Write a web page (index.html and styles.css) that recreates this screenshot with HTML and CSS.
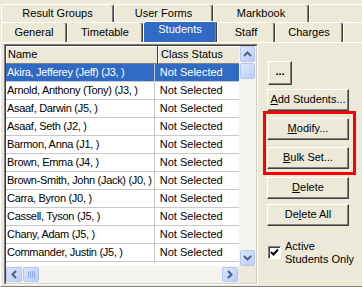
FILE: index.html
```html
<!DOCTYPE html>
<html>
<head>
<meta charset="utf-8">
<link rel="stylesheet" href="styles.css">
</head>
<body>
<div class="win">
  <div class="tabs">
    <div class="tabrow back">
      <div class="tab t-result">Result Groups</div>
      <div class="tab t-forms">User Forms</div>
      <div class="tab t-mark">Markbook</div>
      <div class="tab t-fill"></div>
    </div>
    <div class="tabrow front">
      <div class="tab t-general">General</div>
      <div class="tab t-time">Timetable</div>
      <div class="tab t-students sel">Students</div>
      <div class="tab t-staff">Staff</div>
      <div class="tab t-charges">Charges</div>
      <div class="tab t-fill"></div>
    </div>
  </div>
  <div class="panel">
    <div class="list">
      <div class="listin">
        <div class="client">
          <div class="hdr"><div class="h1">Name</div><div class="h2">Class Status</div></div>
          <div class="row sel"><div class="c1">Akira, Jefferey (Jeff) (J3, )</div><div class="c2">Not Selected</div></div>
          <div class="row"><div class="c1">Arnold, Anthony (Tony) (J3, )</div><div class="c2">Not Selected</div></div>
          <div class="row"><div class="c1">Asaaf, Darwin (J5, )</div><div class="c2">Not Selected</div></div>
          <div class="row"><div class="c1">Asaaf, Seth (J2, )</div><div class="c2">Not Selected</div></div>
          <div class="row"><div class="c1">Barmon, Anna (J1, )</div><div class="c2">Not Selected</div></div>
          <div class="row"><div class="c1">Brown, Emma (J4, )</div><div class="c2">Not Selected</div></div>
          <div class="row"><div class="c1">Brown-Smith, John (Jack) (J0, )</div><div class="c2">Not Selected</div></div>
          <div class="row"><div class="c1">Carra, Byron (J0, )</div><div class="c2">Not Selected</div></div>
          <div class="row"><div class="c1">Cassell, Tyson (J5, )</div><div class="c2">Not Selected</div></div>
          <div class="row"><div class="c1">Chany, Adam (J5, )</div><div class="c2">Not Selected</div></div>
          <div class="row"><div class="c1">Commander, Justin (J5, )</div><div class="c2">Not Selected</div></div>
        </div>
        <div class="vscroll">
          <div class="sbtn vbtn"><svg width="9" height="6" viewBox="0 0 9 6"><path d="M1 5 L4.5 1.5 L8 5" fill="none" stroke="#4D6185" stroke-width="2"/></svg></div>
          <div class="sbtn vthumb"></div>
          <div class="sbtn vbtn vdown"><svg width="9" height="6" viewBox="0 0 9 6"><path d="M1 1 L4.5 4.5 L8 1" fill="none" stroke="#4D6185" stroke-width="2"/></svg></div>
        </div>
        <div class="hscroll">
          <div class="sbtn hbtn"><svg width="6" height="9" viewBox="0 0 6 9"><path d="M5 1 L1.5 4.5 L5 8" fill="none" stroke="#4D6185" stroke-width="2"/></svg></div>
          <div class="sbtn hthumb"><svg width="7" height="7" viewBox="0 0 7 7"><path d="M0.5 0 V7 M2.5 0 V7 M4.5 0 V7 M6.5 0 V7" stroke="#8FA9E6" stroke-width="1"/></svg></div>
          <div class="sbtn hbtn hright"><svg width="6" height="9" viewBox="0 0 6 9"><path d="M1 1 L4.5 4.5 L1 8" fill="none" stroke="#4D6185" stroke-width="2"/></svg></div>
        </div>
        <div class="corner"></div>
      </div>
    </div>
    <div class="side">
      <div class="btn dots">...</div>
      <div class="btn b-add"><u>A</u>dd Students...</div>
      <div class="btn b-modify"><u>M</u>odify...</div>
      <div class="btn b-bulk"><u>B</u>ulk Set...</div>
      <div class="btn b-delete"><u>D</u>elete</div>
      <div class="btn b-delall">De<u>l</u>ete All</div>
      <div class="chk">
        <div class="box"><svg width="9" height="9" viewBox="0 0 9 9"><path d="M1 4 L3.5 6.5 L8 1.5" fill="none" stroke="#000" stroke-width="2"/></svg></div>
        <div class="lbl">Active<br>Students Only</div>
      </div>
    </div>
  </div>
  <div class="annot"></div>
</div>
</body>
</html>
```

FILE: styles.css
```css
body {
  margin: 0;
  background: #ECE9D8;
  font: 11px "Liberation Sans", Arial, sans-serif;
  color: #000;
}
.win {
  position: relative;
  width: 362px;
  height: 287px;
  overflow: hidden;
}
.tabs {
  padding: 4px 0 0 1px;
}
.tabrow {
  display: flex;
}
.back { height: 18px; }
.front { height: 20px; }
.tab {
  box-sizing: border-box;
  flex: none;
  height: 100%;
  border-top: 1px solid #fff;
  border-left: 1px solid #fff;
  border-right: 1px solid #404040;
  box-shadow: inset -1px 0 #808080;
  border-radius: 3px 3px 0 0;
  text-align: center;
  white-space: nowrap;
  background: #ECE9D8;
}
.back .tab { line-height: 17px; }
.front .tab { line-height: 19px; }
.t-result { width: 113px; }
.t-forms { width: 99px; }
.t-mark { width: 96px; }
.t-general { width: 66px; }
.t-time { width: 76px; }
.t-students { width: 74px; }
.t-staff { width: 58px; }
.t-charges { width: 68px; }
.t-fill { width: 60px; }
.tab.sel {
  background: #316AC5;
  color: #fff;
  margin-top: -1px;
  height: 21px;
  line-height: 15px;
  position: relative;
  z-index: 1;
}
.panel {
  display: flex;
  height: 245px;
  box-sizing: border-box;
  border-top: 1px solid #fff;
  border-left: 1px solid #fff;
  border-bottom: 1px solid #808080;
  padding: 1px 0 0 3px;
}
.list {
  box-sizing: border-box;
  width: 254px;
  height: 241px;
  flex: none;
  border: 1px solid;
  border-color: #808080 #fff #fff #808080;
}
.listin {
  box-sizing: border-box;
  height: 100%;
  border: 1px solid;
  border-color: #404040 #D4D0C8 #D4D0C8 #404040;
  display: grid;
  grid-template-columns: 233px 17px;
  grid-template-rows: 220px 17px;
}
.client {
  background: #fff;
  overflow: hidden;
}
.hdr {
  display: flex;
  height: 18px;
  background: #ECE9D8;
}
.hdr > div {
  box-sizing: border-box;
  height: 18px;
  line-height: 17px;
  border-right: 1px solid #404040;
  border-bottom: 1px solid #808080;
  box-shadow: inset 1px 1px #fff;
  white-space: nowrap;
  overflow: hidden;
}
.h1 { width: 152px; padding-left: 2px; }
.h2 { width: 81px; padding-left: 3px; border-right: none !important; }
.row {
  display: flex;
  height: 18px;
  box-sizing: border-box;
  border-bottom: 1px solid #C8C8C8;
  line-height: 16px;
}
.row > div {
  white-space: nowrap;
  overflow: hidden;
}
.c1 {
  box-sizing: border-box;
  width: 152px;
  padding-left: 1px;
  border-right: 1px solid #C8C8C8;
  letter-spacing: -0.3px;
}
.c2 {
  width: 81px;
  padding-left: 5px;
}
.row.sel > div {
  background: #316AC5;
  color: #fff;
}
.vscroll {
  background: #F4F3EE;
  display: flex;
  flex-direction: column;
  padding-left: 1px;
}
.hscroll {
  background: #F4F3EE;
  display: flex;
  padding-top: 1px;
}
.corner {
  background: #ECE9D8;
}
.sbtn {
  box-sizing: border-box;
  border: 1px solid #B4C6F0;
  border-radius: 2px;
  background: linear-gradient(135deg, #DCE6FE, #BACCF7);
  display: flex;
  align-items: center;
  justify-content: center;
}
.vbtn { width: 15px; height: 16px; }
.vthumb { width: 15px; height: 16px; margin-top: 1px; }
.vdown { margin-top: auto; }
.hbtn { width: 16px; height: 15px; }
.hthumb { width: 16px; height: 15px; margin-left: 1px; }
.hright { margin-left: auto; margin-right: 1px; }
.side {
  margin-left: 9px;
  padding-top: 17px;
  width: 82px;
  flex: none;
  display: flex;
  flex-direction: column;
}
.btn {
  box-sizing: border-box;
  width: 82px;
  height: 22px;
  border: 1px solid;
  border-color: #fff #404040 #404040 #fff;
  box-shadow: inset -1px -1px #808080;
  background: #ECE9D8;
  text-align: center;
  line-height: 19px;
  white-space: nowrap;
}
.dots {
  width: 24px;
  height: 24px;
  margin-left: 1px;
  font-weight: bold;
  line-height: 18px;
}
.b-add { margin-top: 4px; }
.b-modify { margin-top: 7px; }
.b-bulk { margin-top: 7px; }
.b-delete { margin-top: 8px; }
.b-delall { margin-top: 5px; }
.chk {
  display: flex;
  margin-top: 14px;
  margin-left: 1px;
}
.box {
  box-sizing: border-box;
  width: 13px;
  height: 13px;
  margin-top: 6px;
  flex: none;
  background: #fff;
  border: 1px solid;
  border-color: #808080 #fff #fff #808080;
  box-shadow: inset 1px 1px #404040;
  display: flex;
  align-items: center;
  justify-content: center;
}
.lbl {
  margin-left: 4px;
  line-height: 13px;
  white-space: nowrap;
}
.annot {
  position: absolute;
  left: 263px;
  top: 111px;
  width: 93px;
  height: 64px;
  box-sizing: border-box;
  border: 3px solid #FF0000;
}
```
